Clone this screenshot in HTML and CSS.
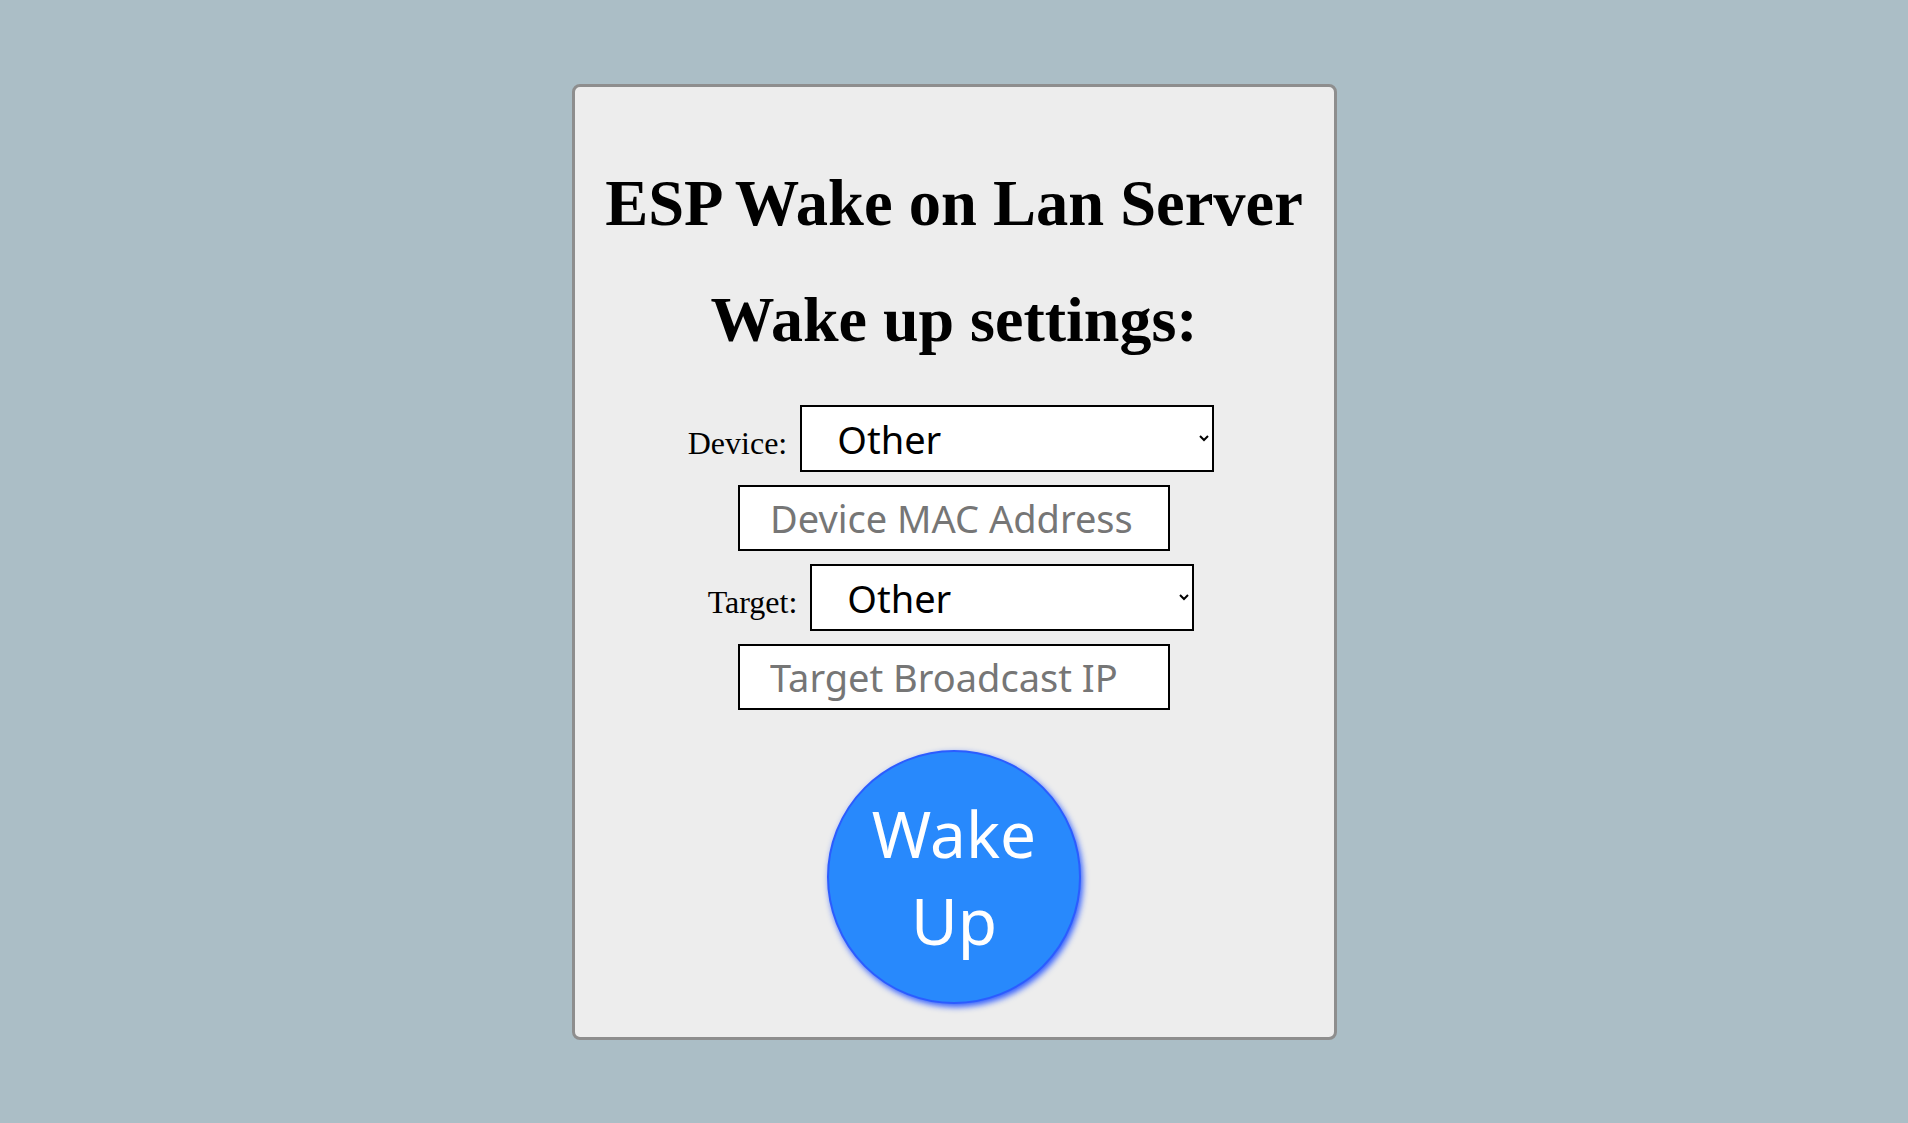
FILE: index.html
```html
<!DOCTYPE html>
<html lang="en">
<head>
<meta charset="utf-8">
<title>ESP Wake on Lan Server</title>
<link rel="stylesheet" href="styles.css">
</head>
<body>
  <main class="card">
    <h1 class="title">ESP Wake on Lan Server</h1>
    <h2 class="subtitle">Wake up settings:</h2>
    <form class="settings">
      <div class="row row-labelled">
        <label class="label" for="device">Device:</label>
        <select class="select select-device" id="device">
          <option>Other</option>
        </select>
      </div>
      <div class="row">
        <input class="field" type="text" placeholder="Device MAC Address">
      </div>
      <div class="row row-labelled">
        <label class="label" for="target">Target:</label>
        <select class="select select-target" id="target">
          <option>Other</option>
        </select>
      </div>
      <div class="row">
        <input class="field" type="text" placeholder="Target Broadcast IP">
      </div>
      <button class="wake" type="button">Wake Up</button>
    </form>
  </main>
</body>
</html>
```

FILE: styles.css
```css
html, body {
  margin: 0;
  padding: 0;
}

body {
  background: #abbec6;
  font-family: "Liberation Serif", "Times New Roman", serif;
  padding-top: 84px;
  min-height: 1123px;
  box-sizing: border-box;
}

.card {
  width: 765px;
  margin: 0 auto;
  box-sizing: border-box;
  background: #ededed;
  border: 3px solid #8e8e8e;
  border-radius: 8px;
  padding: 80px 0 33px;
  display: flex;
  flex-direction: column;
  align-items: center;
}

.title,
.subtitle {
  font-size: 64px;
  font-weight: bold;
  line-height: normal;
  margin: 0;
  color: #000;
  text-align: center;
}

.title {
  font-size: 64.5px;
}

.subtitle {
  margin-top: 42px;
}

.settings {
  margin-top: 48px;
  display: flex;
  flex-direction: column;
  align-items: center;
  gap: 13px;
}

.row {
  display: flex;
  align-items: baseline;
  justify-content: center;
  gap: 13px;
}

.row-labelled {
  padding-right: 6px;
}

.label {
  font-family: "Liberation Serif", "Times New Roman", serif;
  font-size: 32px;
  color: #000;
}

.select,
.field {
  font-family: "Noto Sans", "Open Sans", sans-serif;
  font-size: 38px;
  color: #000;
  background: #fff;
  border: 2px solid #000;
  border-radius: 0;
  box-sizing: border-box;
  margin: 0;
}

.select {
  height: 67px;
  padding: 0 0 0 31px;
}

.select-device {
  width: 414px;
}

.select-target {
  width: 384px;
}

.field {
  width: 432px;
  height: 66px;
  padding: 0 0 0 30px;
  outline: none;
}

.field::placeholder {
  color: #767676;
}

.wake {
  margin-top: 27px;
  width: 254px;
  height: 254px;
  border-radius: 50%;
  background: #2889fc;
  border: 2px solid #2b5cff;
  box-shadow: 2px 3px 6px #2e5cff;
  color: #fff;
  font-family: "Noto Sans", "Open Sans", sans-serif;
  font-size: 64px;
  line-height: normal;
  padding: 0;
  cursor: pointer;
}
```
